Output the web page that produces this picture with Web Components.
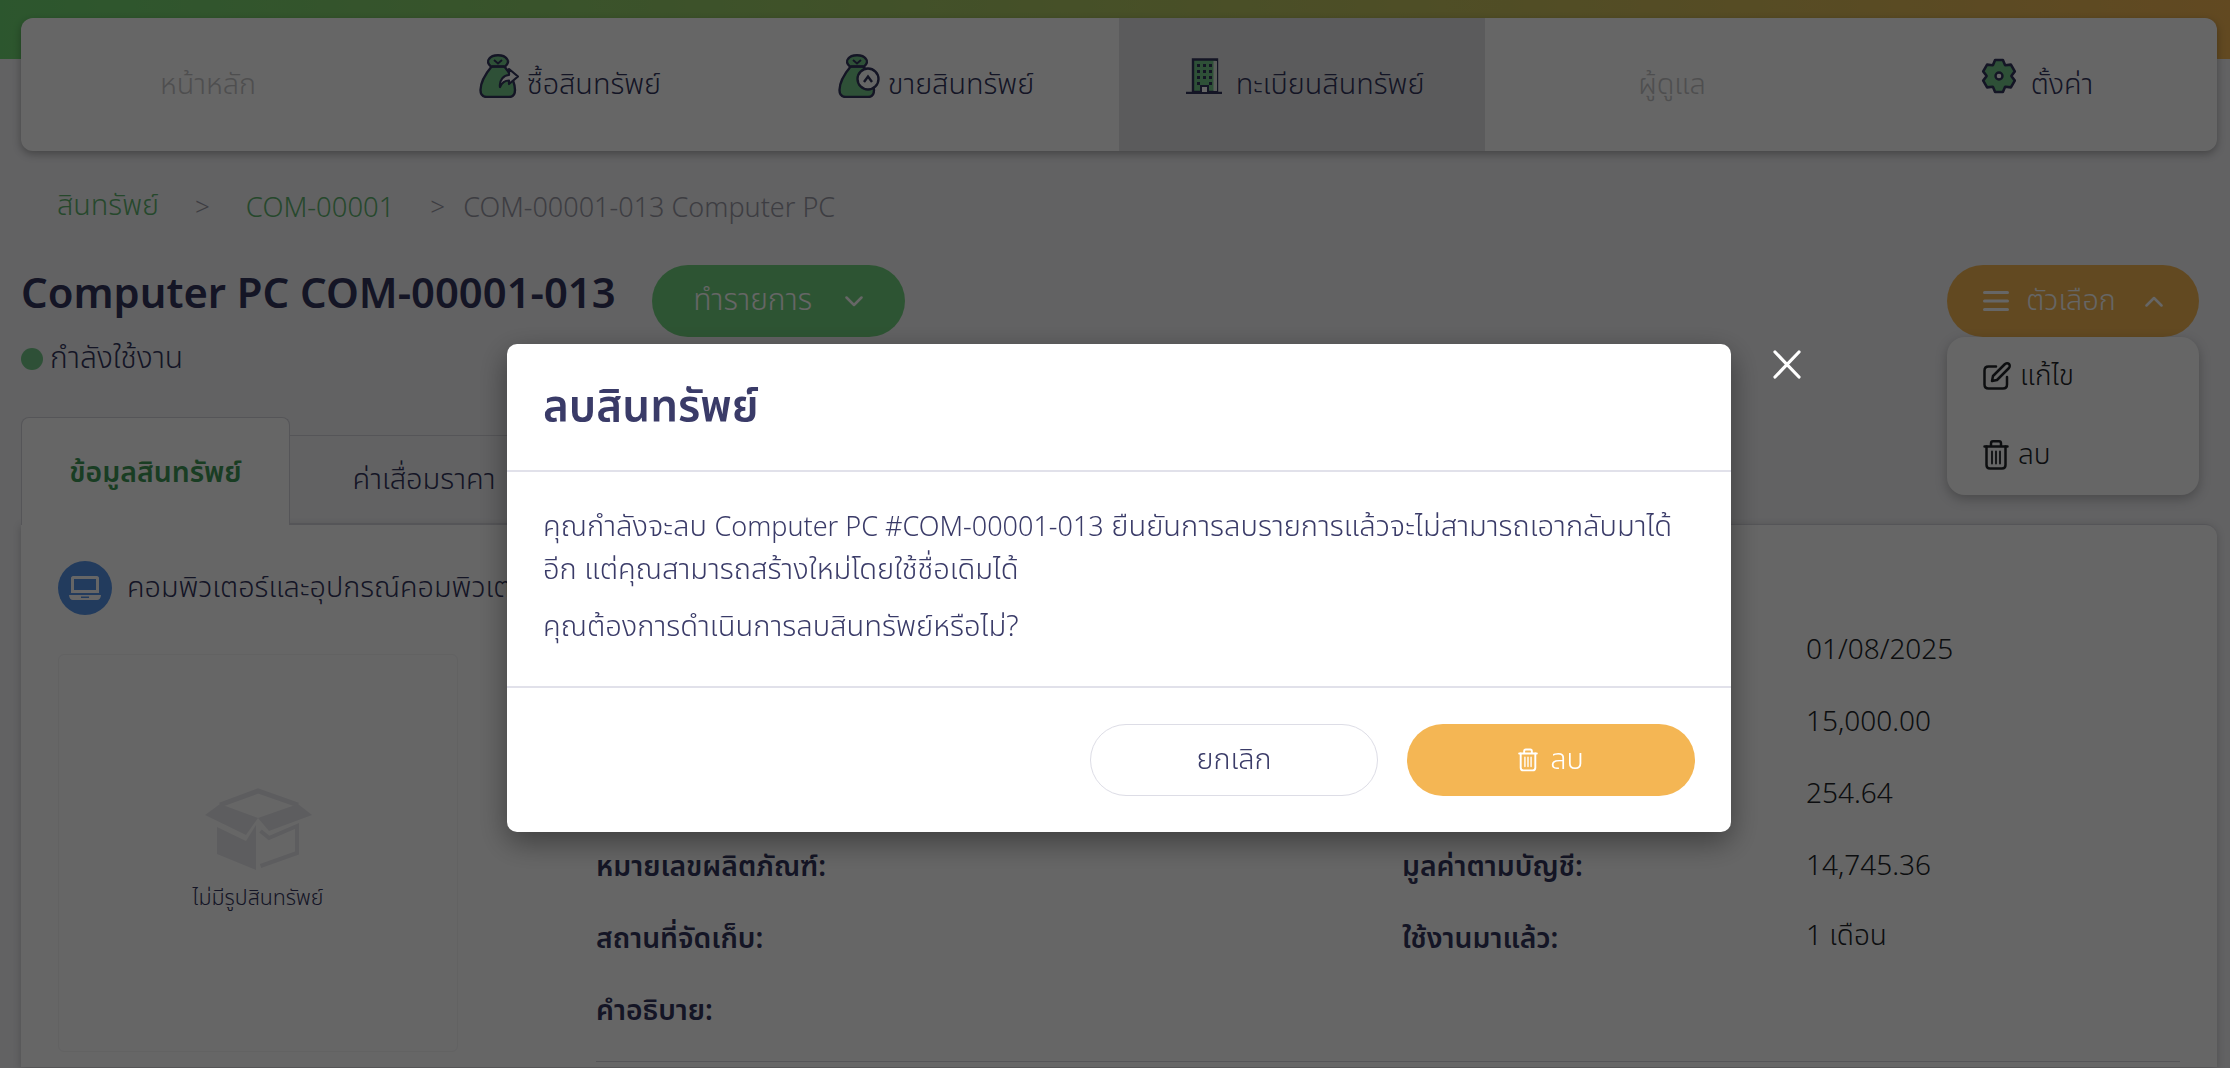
<!DOCTYPE html>
<html lang="th">
<head>
<meta charset="utf-8">
<title>ลบสินทรัพย์</title>
<style>
html, body { margin: 0; height: 100%; }
body {
	width: 2230px;
	height: 1068px;
	overflow: hidden;
	background: #f4f4f7;
	color: #3a3b68;
	font-family: "Noto Sans", "Noto Sans Thai", "Noto Sans Thai Looped", sans-serif;
	font-size: 28.800px;
	font-weight: 300;
}
confirm-modal p span { font-size: 27px; }
</style>
</head>
<body>
<page-shell>
	<asset-nav>
		<nav-item muted>หน้าหลัก</nav-item>
		<nav-item icon="buy">ซื้อสินทรัพย์</nav-item>
		<nav-item icon="sell">ขายสินทรัพย์</nav-item>
		<nav-item icon="building" wide active>ทะเบียนสินทรัพย์</nav-item>
		<nav-item muted>ผู้ดูแล</nav-item>
		<nav-item icon="gear" wide>ตั้งค่า</nav-item>
	</asset-nav>

	<bread-crumbs>
		<a>สินทรัพย์</a>
		<i>&gt;</i>
		<a class="code">COM-00001</a>
		<i class="last">&gt;</i>
		<span>COM-00001-013 Computer PC</span>
	</bread-crumbs>

	<asset-title heading="Computer PC COM-00001-013" status="กำลังใช้งาน"></asset-title>

	<tab-row>
		<tab-item active>ข้อมูลสินทรัพย์</tab-item>
		<tab-item>ค่าเสื่อมราคา</tab-item>
	</tab-row>

	<asset-card category="คอมพิวเตอร์และอุปกรณ์คอมพิวเตอร์">
		<info-row value="01/08/2025"></info-row>
		<info-row value="15,000.00"></info-row>
		<info-row value="254.64"></info-row>
		<info-row label="หมายเลขผลิตภัณฑ์:" label2="มูลค่าตามบัญชี:" value="14,745.36"></info-row>
		<info-row label="สถานที่จัดเก็บ:" label2="ใช้งานมาแล้ว:" value="1 เดือน"></info-row>
		<info-row label="คำอธิบาย:"></info-row>
	</asset-card>
</page-shell>

<confirm-modal heading="ลบสินทรัพย์">
	<p>คุณกำลังจะลบ <span>Computer PC #COM-00001-013</span> ยืนยันการลบรายการแล้วจะไม่สามารถเอากลับมาได้อีก แต่คุณสามารถสร้างใหม่โดยใช้ชื่อเดิมได้</p>
	<p>คุณต้องการดำเนินการลบสินทรัพย์หรือไม่?</p>
</confirm-modal>

<script>
const NAVY = '#33355c';
const LEAF = '#74c98a';

// six toothed gear, teeth on top and bottom
const gearPath = () => {
	let d = '';
	for (let i = 0; i < 6; i++) {
		const a = (i * 60 - 90) * Math.PI / 180;
		const pt = (r, off) => {
			const x = 18 + r * Math.cos(a + off);
			const y = 18 + r * Math.sin(a + off);
			return x.toFixed(1) + ' ' + y.toFixed(1);
		};
		d += (i ? 'L' : 'M') + pt(12.5, -0.5) + 'L' + pt(16.5, -0.24) + 'L' + pt(16.5, 0.24) + 'L' + pt(12.5, 0.5);
	}
	return d + 'Z';
};

const bag = `
	<path d="M13 12C8 18 1.500 27 1.500 36C1.500 41 4 43 8 43H30C34 43 36 41 36 36C36 27 30 18 25 12Z" fill="${LEAF}" stroke="${NAVY}" stroke-width="2.400" stroke-linejoin="round"/>
	<path d="M12 12.500C9 10 8 7 10 5C12 2 16 1.200 19 1.200C22 1.200 26 2 28 5C30 7 29 10 26 12.500Z" fill="${LEAF}" stroke="${NAVY}" stroke-width="2.400" stroke-linejoin="round"/>
	<path d="M13 12.500H25M15 6L19 9.500L23 6" fill="none" stroke="${NAVY}" stroke-width="2"/>`;

const trashPaths = `
		<path d="M1.500 6.500H24.500M8 6V3.500C8 2 9 1.300 10 1.300H16C17 1.300 18 2 18 3.500V6"/>
		<path d="M3.500 6.500V25C3.500 27.300 4.700 28.500 7 28.500H19C21.300 28.500 22.500 27.300 22.500 25V6.500"/>
		<path d="M9 11.500V23.500M13 11.500V23.500M17 11.500V23.500" stroke-width="1.800"/>`;

const ICONS = {
	buy: `<svg width="40" height="44" viewBox="0 0 40 44">${bag}
		<path d="M21 33C20 26 25 21 30 21V15L39 22.500L30 30V26.500C26 26.500 23 28.500 21 33Z" fill="#fff" stroke="${NAVY}" stroke-width="2.200" stroke-linejoin="round"/></svg>`,
	sell: `<svg width="42" height="44" viewBox="0 0 42 44">${bag}
		<circle cx="30" cy="25" r="10.500" fill="#fff" stroke="${NAVY}" stroke-width="2.400"/>
		<path d="M26 28L30 22.500L34 28" fill="none" stroke="${NAVY}" stroke-width="2.400"/></svg>`,
	building: `<svg width="36" height="36" viewBox="0 0 36 36">
		<path d="M7 1.500H31V34H7Z" fill="${LEAF}" stroke="${NAVY}" stroke-width="2.400"/>
		<path d="M27.500 3V33H31V3Z" fill="#dfe9e2"/>
		<path d="M0 35H36" stroke="${NAVY}" stroke-width="2.400"/>
		<path d="M11 6h3v3h-3zM17 6h3v3h-3zM23 6h3v3h-3zM11 12h3v3h-3zM17 12h3v3h-3zM23 12h3v3h-3zM11 18h3v3h-3zM17 18h3v3h-3zM23 18h3v3h-3zM11 24h3v3h-3zM23 24h3v3h-3z" fill="${NAVY}"/>
		<path d="M15 34V28H22V34" fill="#fff" stroke="${NAVY}" stroke-width="2"/></svg>`,
	gear: `<svg width="36" height="36" viewBox="0 0 36 36">
		<path d="${gearPath()}" fill="${LEAF}" stroke="${NAVY}" stroke-width="2.600" stroke-linejoin="round"/>
		<circle cx="18" cy="18" r="3.500" fill="#fff" stroke="${NAVY}" stroke-width="2.400"/></svg>`,
	menu: `<svg width="26" height="22" viewBox="0 0 26 22"><path d="M1.500 2.500H24.500M1.500 11H24.500M1.500 19.500H24.500" stroke="currentColor" stroke-width="3" stroke-linecap="round"/></svg>`,
	down: `<svg width="18" height="11" viewBox="0 0 18 11"><path d="M1.500 1.500L9 9L16.500 1.500" fill="none" stroke="currentColor" stroke-width="2.500" stroke-linecap="round" stroke-linejoin="round"/></svg>`,
	up: `<svg width="18" height="11" viewBox="0 0 18 11"><path d="M1.500 9.500L9 2L16.500 9.500" fill="none" stroke="currentColor" stroke-width="2.500" stroke-linecap="round" stroke-linejoin="round"/></svg>`,
	edit: `<svg width="28" height="28" viewBox="0 0 28 28" fill="none" stroke="currentColor" stroke-width="2.500" stroke-linecap="round" stroke-linejoin="round">
		<path d="M13 4.500H5.500C3 4.500 1.500 6 1.500 8.500V22.500C1.500 25 3 26.500 5.500 26.500H20C22.500 26.500 24 25 24 22.500V15"/>
		<path d="M9 19L10 14L21.500 2.500C23 1 25 1 26 2C27 3 27 5 25.500 6.500L14 18Z"/></svg>`,
	trash: `<svg width="26" height="30" viewBox="0 0 26 30" fill="none" stroke="currentColor" stroke-width="2.500" stroke-linecap="round" stroke-linejoin="round">${trashPaths}</svg>`,
	trashSmall: `<svg width="20" height="24" viewBox="0 0 26 30" fill="none" stroke="currentColor" stroke-width="2.500" stroke-linecap="round" stroke-linejoin="round">${trashPaths}</svg>`,
	laptop: `<svg width="32" height="24" viewBox="0 0 32 24" fill="#fff">
		<path d="M4 0H28C29 0 30 1 30 2V17H2V2C2 1 3 0 4 0ZM5 3V14H27V3Z" fill-rule="evenodd"/>
		<path d="M0 19H32C32 22 30 24 28 24H4C2 24 0 22 0 19ZM12 20.500V22H20V20.500Z" fill-rule="evenodd"/></svg>`,
	box: `<svg width="107" height="82" viewBox="0 0 107 82" fill="#e9e9ee">
		<path d="M15 17L53 3L93 17" fill="none" stroke="#e9e9ee" stroke-width="5"/>
		<path d="M0 27L15 16L53 30L41 47Z"/>
		<path d="M107 27L93 16L53 30L64 43Z"/>
		<path d="M12 39L41 53L51 37V82L12 66Z"/>
		<path d="M55.500 43L64 50L92 38V65L55.500 78" fill="none" stroke="#e9e9ee" stroke-width="4"/></svg>`
};

class PageShell extends HTMLElement {
	constructor() {
		super();
		this.attachShadow({mode: 'open'}).innerHTML = `
		<style>
		:host {
			display: block;
			height: 1068px;
			padding: 18px 13px 0 21px;
			box-sizing: border-box;
			overflow: hidden;
			background: linear-gradient(90deg, #6fd873 0%, #f4b654 100%) top / 100% 59px no-repeat;
		}
		</style>
		<slot></slot>`;
	}
}

class AssetNav extends HTMLElement {
	constructor() {
		super();
		this.attachShadow({mode: 'open'}).innerHTML = `
		<style>
		:host {
			display: grid;
			grid-template-columns: repeat(6, 1fr);
			height: 133px;
			background: #fff;
			border-radius: 12px;
			overflow: hidden;
			box-shadow: 0 3px 8px rgba(0, 0, 0, .3);
		}
		</style>
		<slot></slot>`;
	}
}

class NavItem extends HTMLElement {
	constructor() {
		super();
		const name = this.getAttribute('icon');
		this.attachShadow({mode: 'open'}).innerHTML = `
		<style>
		:host {
			display: flex;
			align-items: center;
			justify-content: center;
			gap: 8px;
			font-size: 28.800px;
			color: ${NAVY};
		}
		:host([active]) { background: #e4e4e6; }
		:host([muted]) { padding-left: 8px; color: #c4c4c6; }
		:host([wide]) { padding-left: 6px; gap: 14px; }
		.icon { display: flex; margin-bottom: 18px; }
		</style>
		${name ? `<span class="icon">${ICONS[name]}</span>` : ''}
		<slot></slot>`;
	}
}

class BreadCrumbs extends HTMLElement {
	constructor() {
		super();
		this.attachShadow({mode: 'open'}).innerHTML = `
		<style>
		:host {
			display: flex;
			align-items: center;
			height: 40px;
			margin: 35px 0 0 36px;
			font-size: 28.800px;
			color: #9a9aa6;
		}
		::slotted(a) { color: #5fb56f; }
		::slotted(.code) { font-size: 27.400px; }
		::slotted(span) { font-size: 27px; }
		::slotted(i) { margin: 0 36px; font-style: normal; font-size: 26px; }
		::slotted(.last) { margin-right: 18px; }
		</style>
		<slot></slot>`;
	}
}

class PillButton extends HTMLElement {
	constructor() {
		super();
		this.attachShadow({mode: 'open'}).innerHTML = `
		<style>
		:host {
			display: inline-flex;
			align-items: center;
			justify-content: center;
			height: 72px;
			box-sizing: border-box;
			border-radius: 36px;
			color: #fff;
			font-size: 28.800px;
			gap: 12px;
		}
		</style>
		<slot></slot>`;
	}
}

class AssetTitle extends HTMLElement {
	constructor() {
		super();
		this.attachShadow({mode: 'open'}).innerHTML = `
		<style>
		:host { display: block; margin-top: 39px; position: relative; }
		.head { display: flex; align-items: flex-start; height: 72px; }
		h1 { margin: 0; font-size: 41.800px; font-weight: 600; line-height: 54px; color: ${NAVY}; white-space: nowrap; }
		.go { margin-left: 36px; width: 253px; background: #72d27f; gap: 33px; font-size: 30px; }
		.opt { margin-left: auto; margin-right: 18px; width: 252px; background: #f4b654; gap: 0; }
		.opt .t { margin: 0 29px 0 17px; }
		.state { display: inline-flex; align-items: center; gap: 7px; margin-top: 2px; height: 40px; font-size: 30px; color: ${NAVY}; vertical-align: top; }
		.dot { width: 22px; height: 22px; border-radius: 50%; background: #74c98a; }
		.menu {
			position: absolute;
			top: 72px;
			right: 18px;
			width: 252px;
			height: 158px;
			box-sizing: border-box;
			padding: 16px 36px;
			background: #fff;
			border-radius: 18px;
			box-shadow: 0 4px 12px rgba(0, 0, 0, .25);
			color: #212529;
			font-size: 28px;
		}
		.menu div { display: flex; align-items: center; height: 46px; gap: 9px; }
		.menu div + div { margin-top: 33px; }
		</style>
		<div class="head">
			<h1>${this.getAttribute('heading')}</h1>
			<pill-button class="go">ทำรายการ ${ICONS.down}</pill-button>
			<pill-button class="opt">${ICONS.menu}<span class="t">ตัวเลือก</span>${ICONS.up}</pill-button>
		</div>
		<div class="state"><span class="dot"></span>${this.getAttribute('status')}</div>
		<div class="menu">
			<div>${ICONS.edit}แก้ไข</div>
			<div>${ICONS.trash}ลบ</div>
		</div>`;
	}
}

class TabRow extends HTMLElement {
	constructor() {
		super();
		this.attachShadow({mode: 'open'}).innerHTML = `
		<style>
		:host { display: flex; align-items: flex-end; height: 107px; margin-top: 38px; }
		</style>
		<slot></slot>`;
	}
}

class TabItem extends HTMLElement {
	constructor() {
		super();
		this.attachShadow({mode: 'open'}).innerHTML = `
		<style>
		:host {
			display: flex;
			align-items: center;
			justify-content: center;
			box-sizing: border-box;
			width: 269px;
			height: 89px;
			border: 1px solid #d5d5dc;
			border-left: 0;
			color: ${NAVY};
			font-size: 29px;
		}
		:host([active]) {
			position: relative;
			z-index: 1;
			height: 108px;
			margin-bottom: -1px;
			padding-top: 3px;
			border: 1px solid #d5d5dc;
			border-bottom: 0;
			border-radius: 8px 8px 0 0;
			background: #fff;
			color: #3f9a58;
			font-size: 28.400px;
			font-weight: 600;
		}
		</style>
		<slot></slot>`;
	}
}

class AssetCard extends HTMLElement {
	constructor() {
		super();
		this.attachShadow({mode: 'open'}).innerHTML = `
		<style>
		:host {
			display: grid;
			grid-template-columns: 400px 1fr;
			column-gap: 138px;
			height: 543px;
			box-sizing: border-box;
			padding: 36px 37px 0;
			background: #fff;
			border-radius: 0 12px 0 0;
			border-top: 1px solid #d5d5dc;
			box-shadow: 0 2px 8px rgba(0, 0, 0, .2);
		}
		.cat { display: flex; align-items: center; gap: 15px; height: 54px; color: ${NAVY}; font-size: 28.800px; white-space: nowrap; }
		.round { display: flex; align-items: center; justify-content: center; flex: none; width: 54px; height: 54px; border-radius: 50%; background: #5694e8; }
		.photo {
			display: flex;
			flex-direction: column;
			align-items: center;
			box-sizing: border-box;
			height: 398px;
			margin-top: 39px;
			padding-top: 133px;
			border: 1px solid #f4f4f6;
			border-radius: 6px;
			color: ${NAVY};
			font-size: 21.400px;
		}
		.photo span { margin-top: 12px; }
		.rows { margin-top: 51px; }
		.rule { height: 0; margin-top: 17px; border-top: 1px solid #d5d5dc; }
		</style>
		<div>
			<div class="cat"><span class="round">${ICONS.laptop}</span>${this.getAttribute('category')}</div>
			<div class="photo">${ICONS.box}<span>ไม่มีรูปสินทรัพย์</span></div>
		</div>
		<div class="rows"><slot></slot><div class="rule"></div></div>`;
	}
}

class InfoRow extends HTMLElement {
	constructor() {
		super();
		const label = this.getAttribute('label') || '';
		const label2 = this.getAttribute('label2') || '';
		const value = this.getAttribute('value') || '';
		this.attachShadow({mode: 'open'}).innerHTML = `
		<style>
		:host {
			display: grid;
			grid-template-columns: 806px 404px 1fr;
			align-items: center;
			height: 72px;
			font-size: 28.300px;
		}
		b { padding-top: 7px; font-weight: 600; color: ${NAVY}; }
		span { font-size: 28px; color: #212529; }
		</style>
		<b>${label}</b><b>${label2}</b><span>${value}</span>`;
	}
}

class ConfirmModal extends HTMLElement {
	constructor() {
		super();
		this.attachShadow({mode: 'open'}).innerHTML = `
		<style>
		:host {
			position: fixed;
			inset: 0;
			z-index: 10;
			background: rgba(0, 0, 0, .6);
			font-size: 29.100px;
			color: #3a3b68;
		}
		.dialog {
			position: absolute;
			left: 507px;
			top: 344px;
			width: 1224px;
			box-sizing: border-box;
			background: #fff;
			border-radius: 10px;
			box-shadow: 0 10px 30px rgba(0, 0, 0, .4);
		}
		header { height: 126px; padding: 0 36px; display: flex; align-items: center; border-bottom: 2px solid #e1e1ea; }
		h2 { margin: 0; font-size: 44px; font-weight: 600; }
		.body { height: 214px; box-sizing: border-box; padding: 32px 36px 0; }
		::slotted(p) { margin: 0 0 15px; line-height: 42px; }
		footer { height: 146px; box-sizing: border-box; padding: 36px; display: flex; justify-content: flex-end; gap: 29px; border-top: 2px solid #e1e1ea; }
		pill-button { width: 288px; }
		.no { border: 1px solid #dddde6; color: #3a3b68; }
		.yes { background: #f4b654; }
		.close { position: absolute; left: 1266px; top: 6px; }
		</style>
		<div class="dialog">
			<header><h2>${this.getAttribute('heading')}</h2></header>
			<div class="body"><slot></slot></div>
			<footer>
				<pill-button class="no">ยกเลิก</pill-button>
				<pill-button class="yes">${ICONS.trashSmall}ลบ</pill-button>
			</footer>
			<svg class="close" width="28" height="29" viewBox="0 0 28 29"><path d="M2 2L26 27M26 2L2 27" stroke="#fff" stroke-width="3.200" stroke-linecap="round"/></svg>
		</div>`;
	}
}

customElements.define('page-shell', PageShell);
customElements.define('asset-nav', AssetNav);
customElements.define('nav-item', NavItem);
customElements.define('bread-crumbs', BreadCrumbs);
customElements.define('pill-button', PillButton);
customElements.define('asset-title', AssetTitle);
customElements.define('tab-row', TabRow);
customElements.define('tab-item', TabItem);
customElements.define('asset-card', AssetCard);
customElements.define('info-row', InfoRow);
customElements.define('confirm-modal', ConfirmModal);
</script>
</body>
</html>
